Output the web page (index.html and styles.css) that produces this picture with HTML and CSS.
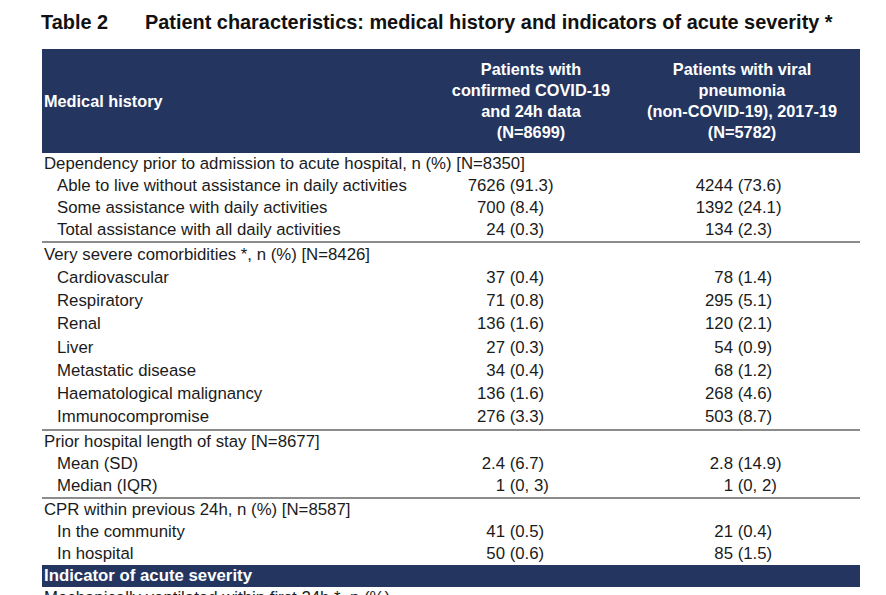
FILE: index.html
```html
<!DOCTYPE html>
<html>
<head>
<meta charset="utf-8">
<link rel="stylesheet" href="styles.css">
</head>
<body>
<div class="page">
  <h1 class="title"><span class="tnum">Table 2</span><span class="ttext">Patient characteristics: medical history and indicators of acute severity *</span></h1>
  <table class="tbl">
    <colgroup>
      <col class="c1"><col class="c2a"><col class="c2b"><col class="c3a"><col class="c3b">
    </colgroup>
    <thead>
      <tr>
        <th class="hl">Medical history</th>
        <th colspan="2" class="hc">Patients with<br>confirmed COVID-19<br>and 24h data<br>(N=8699)</th>
        <th colspan="2" class="hc">Patients with viral<br>pneumonia<br>(non-COVID-19), 2017-19<br>(N=5782)</th>
      </tr>
    </thead>
    <tbody>
      <tr class="r"><td colspan="5" class="g">Dependency prior to admission to acute hospital, n (%) [N=8350]</td></tr>
      <tr class="r"><td class="s">Able to live without assistance in daily activities</td><td class="n">7626</td><td class="p">(91.3)</td><td class="n">4244</td><td class="p">(73.6)</td></tr>
      <tr class="r"><td class="s">Some assistance with daily activities</td><td class="n">700</td><td class="p">(8.4)</td><td class="n">1392</td><td class="p">(24.1)</td></tr>
      <tr class="r"><td class="s">Total assistance with all daily activities</td><td class="n">24</td><td class="p">(0.3)</td><td class="n">134</td><td class="p">(2.3)</td></tr>

      <tr class="r t sep"><td colspan="5" class="g">Very severe comorbidities *, n (%) [N=8426]</td></tr>
      <tr class="r t"><td class="s">Cardiovascular</td><td class="n">37</td><td class="p">(0.4)</td><td class="n">78</td><td class="p">(1.4)</td></tr>
      <tr class="r t"><td class="s">Respiratory</td><td class="n">71</td><td class="p">(0.8)</td><td class="n">295</td><td class="p">(5.1)</td></tr>
      <tr class="r t"><td class="s">Renal</td><td class="n">136</td><td class="p">(1.6)</td><td class="n">120</td><td class="p">(2.1)</td></tr>
      <tr class="r t"><td class="s">Liver</td><td class="n">27</td><td class="p">(0.3)</td><td class="n">54</td><td class="p">(0.9)</td></tr>
      <tr class="r t"><td class="s">Metastatic disease</td><td class="n">34</td><td class="p">(0.4)</td><td class="n">68</td><td class="p">(1.2)</td></tr>
      <tr class="r t"><td class="s">Haematological malignancy</td><td class="n">136</td><td class="p">(1.6)</td><td class="n">268</td><td class="p">(4.6)</td></tr>
      <tr class="r t"><td class="s">Immunocompromise</td><td class="n">276</td><td class="p">(3.3)</td><td class="n">503</td><td class="p">(8.7)</td></tr>

      <tr class="r c sep"><td colspan="5" class="g">Prior hospital length of stay [N=8677]</td></tr>
      <tr class="r c"><td class="s">Mean (SD)</td><td class="n">2.4</td><td class="p">(6.7)</td><td class="n">2.8</td><td class="p">(14.9)</td></tr>
      <tr class="r c"><td class="s">Median (IQR)</td><td class="n">1</td><td class="p">(0, 3)</td><td class="n">1</td><td class="p">(0, 2)</td></tr>

      <tr class="r c sep"><td colspan="5" class="g">CPR within previous 24h, n (%) [N=8587]</td></tr>
      <tr class="r c"><td class="s">In the community</td><td class="n">41</td><td class="p">(0.5)</td><td class="n">21</td><td class="p">(0.4)</td></tr>
      <tr class="r c"><td class="s">In hospital</td><td class="n">50</td><td class="p">(0.6)</td><td class="n">85</td><td class="p">(1.5)</td></tr>

      <tr class="bar"><td colspan="5">Indicator of acute severity</td></tr>
      <tr class="r"><td colspan="5" class="g">Mechanically ventilated within first 24h *, n (%)</td></tr>
    </tbody>
  </table>
</div>
</body>
</html>
```

FILE: styles.css
```css
html, body {
  margin: 0;
  padding: 0;
  background: #ffffff;
  overflow: hidden;
}
.page {
  width: 886px;
  height: 595px;
  padding: 11px 0 0 42px;
  box-sizing: border-box;
  font-family: "Liberation Sans", Arial, sans-serif;
  color: #1b1b1b;
  overflow: hidden;
}
.title {
  margin: 0;
  font-size: 19.9px;
  line-height: 22px;
  font-weight: bold;
  color: #111;
  display: flex;
  margin-left: -1px;
}
.tnum {
  width: 104px;
}
.tbl {
  margin-top: 16px;
  border-collapse: collapse;
  table-layout: fixed;
  width: 818px;
  font-size: 16.8px;
}
.c1 { width: 396px; }
.c2a { width: 67px; }
.c2b { width: 119px; }
.c3a { width: 109px; }
.c3b { width: 127px; }
.tbl th {
  background: #243560;
  color: #ffffff;
  font-weight: bold;
  font-size: 16.3px;
  line-height: 21px;
  height: 104px;
  padding: 0;
  vertical-align: middle;
}
.hl {
  text-align: left;
  padding-left: 2px !important;
}
.hc {
  text-align: center;
}
.tbl td {
  padding: 0;
  white-space: nowrap;
}
.r td {
  height: 22px;
  line-height: 22px;
}
.r.t td {
  height: 23.25px;
}
.r.c td {
  height: 21.7px;
}
.sep td {
  border-top: 2px solid #8c8c8c;
}
.g {
  padding-left: 2px !important;
}
.s {
  padding-left: 15px !important;
}
.n {
  text-align: right;
}
.p {
  text-align: left;
  padding-left: 4.7px !important;
}
.bar td {
  background: #243560;
  color: #ffffff;
  font-weight: bold;
  height: 22px;
  line-height: 22px;
  padding-left: 2px;
}
```
